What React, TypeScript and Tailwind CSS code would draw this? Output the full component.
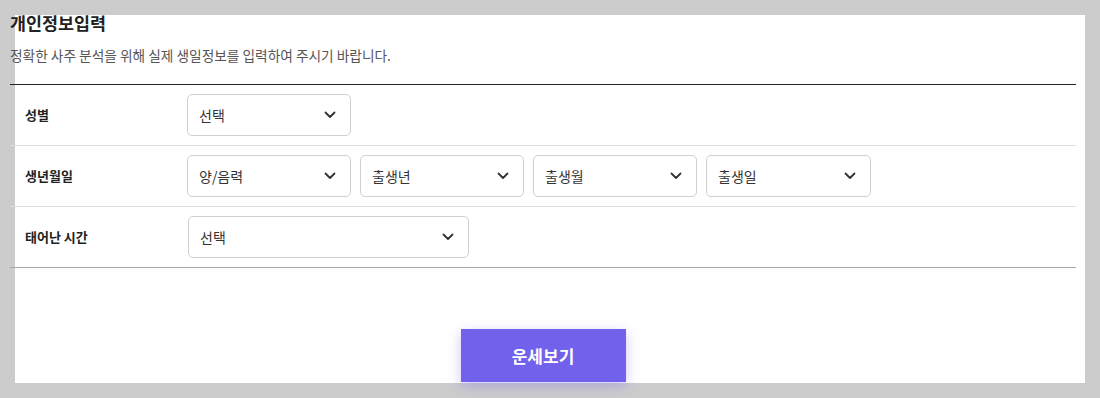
import { ReactNode } from "react";

const Chevron = () => (
  <svg width="12" height="8" viewBox="0 0 12 8" fill="none" className="shrink-0">
    <path d="M1.5 1.5L6 6L10.5 1.5" stroke="#333" strokeWidth="1.8" strokeLinecap="round" strokeLinejoin="round" />
  </svg>
);

const SelectBox = ({ label, width }: { label: string; width: string }) => (
  <div
    className={`${width} h-[42px] flex items-center justify-between pl-[11px] pr-[14px] border border-[#d0d0d0] rounded-[5px] bg-white text-[14px] text-[#333]`}
  >
    <span>{label}</span>
    <Chevron />
  </div>
);

const Row = ({ title, children, last }: { title: string; children: ReactNode; last?: boolean }) => (
  <div className={`flex items-center h-[61px] border-b ${last ? "border-[#a8a8a8]" : "border-[#dddddd]"}`}>
    <div className="w-[177px] pl-[15px] text-[13px] font-bold text-[#222]">{title}</div>
    <div className="flex gap-[9px]">{children}</div>
  </div>
);

export default function App() {
  return (
    <div
      className="h-[398px] overflow-hidden bg-[#cccccc] pt-[15px] pl-[15px]"
      style={{ fontFamily: '"Noto Sans CJK KR", "Noto Sans", sans-serif' }}
    >
      <div className="flow-root w-[1070px] h-[368px] bg-white">
        <div className="-ml-[5px] -mt-[5px] w-[1066px]">
          <h2 className="text-[17.4px] font-bold leading-[26px] text-[#222]">개인정보입력</h2>
          <p className="mt-[9px] text-[13.7px] leading-[20px] text-[#555]">
            정확한 사주 분석을 위해 실제 생일정보를 입력하여 주시기 바랍니다.
          </p>

          <div className="mt-[19px] border-t border-[#222]">
            <Row title="성별">
              <SelectBox label="선택" width="w-[164px]" />
            </Row>
            <Row title="생년월일">
              <SelectBox label="양/음력" width="w-[164px]" />
              <SelectBox label="출생년" width="w-[164px]" />
              <SelectBox label="출생월" width="w-[164px]" />
              <SelectBox label="출생일" width="w-[165px]" />
            </Row>
            <Row title="태어난 시간" last>
              <div className="ml-[1px]">
                <SelectBox label="선택" width="w-[281px]" />
              </div>
            </Row>
          </div>

          <div className="flex justify-center mt-[61px]">
            <button className="w-[165px] h-[53px] bg-[#7261ea] text-white text-[17px] font-bold shadow-[0_4px_12px_rgba(114,97,234,0.35)]">
              운세보기
            </button>
          </div>
        </div>
      </div>
    </div>
  );
}
